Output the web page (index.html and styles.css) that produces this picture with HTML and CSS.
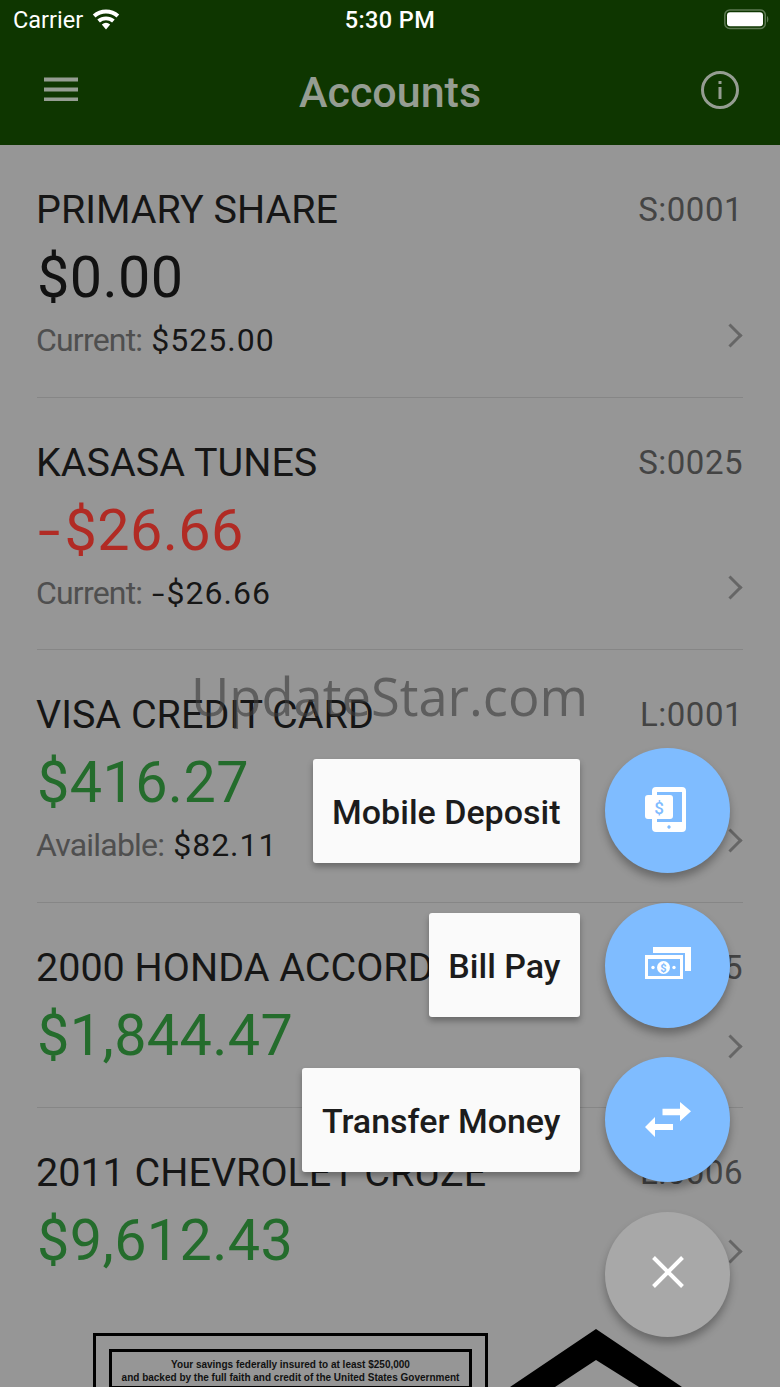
FILE: index.html
```html
<!DOCTYPE html>
<html lang="en">
<head>
<meta charset="utf-8">
<title>Accounts</title>
<link rel="stylesheet" href="styles.css">
</head>
<body>
<div class="app">
  <header class="top">
    <div class="status">
      <div class="status-left"><span>Carrier</span>
        <svg class="wifi" width="28" height="22" viewBox="0 0 28 22"><path d="M14 21.500 L9.800 16.600 A6.500 6.500 0 0 1 18.200 16.600Z M7.900 14.500 L5.300 11.600 A13.500 13.500 0 0 1 22.700 11.600 L20.100 14.500 A9.500 9.500 0 0 0 7.900 14.500Z M3.500 9.500 L.8 6.500 A20 20 0 0 1 27.200 6.500 L24.500 9.500 A16 16 0 0 0 3.500 9.500Z" fill="#fff"/></svg>
      </div>
      <div class="status-time">5:30 PM</div>
      <svg class="battery" width="46" height="22" viewBox="0 0 46 22"><rect x=".8" y="2" width="40.500" height="18.500" rx="5" fill="none" stroke="#5d7a52" stroke-width="1.500"/><rect x="3" y="4.200" width="36" height="14" rx="3" fill="#fff"/><path d="M43 8 c1.800 .5 1.800 6 0 6.500z" fill="#5d7a52"/></svg>
    </div>
    <div class="nav">
      <svg class="menu" width="36" height="24" viewBox="0 0 36 24"><path d="M1 2.500h34M1 12.500h34M1 22.500h34" stroke="#959d92" stroke-width="4"/></svg>
      <h1>Accounts</h1>
      <svg class="info" width="40" height="40" viewBox="0 0 40 40"><circle cx="20" cy="20" r="17.500" fill="none" stroke="#959d92" stroke-width="3"/><path d="M18.500 17h3v12h-3zM18.500 11h3v3h-3z" fill="#959d92"/></svg>
    </div>
  </header>

  <main class="list">
    <section class="row tall">
      <div class="row-head"><span class="name">PRIMARY SHARE</span><span class="code">S:0001</span></div>
      <div class="amount">$0.00</div>
      <div class="row-foot"><span class="sub"><span class="muted">Current:</span> $525.00</span><span class="chev"></span></div>
    </section>
    <section class="row tall">
      <div class="row-head"><span class="name">KASASA TUNES</span><span class="code">S:0025</span></div>
      <div class="amount red"><span class="neg">-</span>$26.66</div>
      <div class="row-foot"><span class="sub"><span class="muted">Current:</span> <span class="neg">-</span>$26.66</span><span class="chev"></span></div>
    </section>
    <section class="row tall">
      <div class="row-head"><span class="name">VISA CREDIT CARD</span><span class="code">L:0001</span></div>
      <div class="amount green">$416.27</div>
      <div class="row-foot"><span class="sub"><span class="muted">Available:</span> $82.11</span><span class="chev"></span></div>
    </section>
    <section class="row short">
      <div class="row-head"><span class="name">2000 HONDA ACCORD</span><span class="code">L:0005</span></div>
      <div class="row-foot"><span class="amount green">$1,844.47</span><span class="chev"></span></div>
    </section>
    <section class="row short last">
      <div class="row-head"><span class="name">2011 CHEVROLET CRUZE</span><span class="code">L:0006</span></div>
      <div class="row-foot"><span class="amount green">$9,612.43</span><span class="chev"></span></div>
    </section>
  </main>

  <footer class="badges">
    <div class="ncua">
      <div class="ncua-inner">Your savings federally insured to at least $250,000<br>and backed by the full faith and credit of the United States Government</div>
    </div>
    <svg class="house" width="172" height="58" viewBox="0 0 172 58"><path d="M86 0 L172 58 H129 L86 31 L45 58 H0Z" fill="#000"/></svg>
  </footer>

  <div class="watermark">UpdateStar.com</div>

  <div class="fabs">
    <div class="fab-row">
      <div class="fab-label">Mobile Deposit</div>
      <button class="fab blue" type="button" aria-label="Mobile Deposit">
        <svg class="icon-deposit" width="41" height="45" viewBox="0 0 41 45"><path fill="#fff" fill-rule="evenodd" d="M11 0H37a4 4 0 0 1 4 4V41a4 4 0 0 1-4 4H11a4 4 0 0 1-4-4V32H3a3 3 0 0 1-3-3V11a3 3 0 0 1 3-3H7V4a4 4 0 0 1 4-4zM12 5V8H25a3 3 0 0 1 3 3V29a3 3 0 0 1-3 3H12v3H37V5zM24 38.300a1.700 1.700 0 1 0 .01 0z"/><text x="14" y="27" font-family="Roboto" font-size="17" font-weight="500" fill="#7fbcff" text-anchor="middle">$</text></svg>
      </button>
    </div>
    <div class="fab-row">
      <div class="fab-label">Bill Pay</div>
      <button class="fab blue" type="button" aria-label="Bill Pay">
        <svg class="icon-up" width="46" height="32" viewBox="0 0 46 32"><path d="M8 0h38v24h-6V6H8z" fill="#fff"/><rect x="0" y="8" width="38" height="24" fill="#fff"/><rect x="3" y="12" width="32" height="17" fill="#7fbcff"/><circle cx="18.500" cy="20.500" r="6.500" fill="#fff"/><circle cx="8" cy="20.500" r="1.700" fill="#fff"/><circle cx="29" cy="20.500" r="1.700" fill="#fff"/><text x="18.500" y="24.500" font-family="Roboto" font-size="11" font-weight="700" fill="#7fbcff" text-anchor="middle">$</text></svg>
      </button>
    </div>
    <div class="fab-row">
      <div class="fab-label">Transfer Money</div>
      <button class="fab blue" type="button" aria-label="Transfer Money">
        <svg width="46" height="35" viewBox="0 0 46 35"><path d="M17.500 6.700H35V0L46 9.300 35 19.300V13.300H17.500zM28 22V28H10V35L0 25 10 15V22z" fill="#fff"/></svg>
      </button>
    </div>
    <div class="fab-row">
      <button class="fab grey" type="button" aria-label="Close">
        <svg class="icon-up" width="32" height="32" viewBox="0 0 32 32"><path d="M1.500 1.500l29 29M30.500 1.500l-29 29" stroke="#fff" stroke-width="4"/></svg>
      </button>
    </div>
  </div>
</div>
</body>
</html>
```
FILE: styles.css
```css
* { box-sizing: border-box; }
html, body { margin: 0; padding: 0; }
body { width: 780px; height: 1387px; overflow: hidden; background: #969696; font-family: Roboto, "Liberation Sans", sans-serif; }
.app { position: relative; width: 780px; height: 1387px; overflow: hidden; }

.top { height: 145px; background: #0e3600; }
.status { height: 40px; position: relative; display: flex; align-items: center; justify-content: space-between; padding: 0 13px; color: #fff; font-size: 23.5px; }
.status-left { display: flex; align-items: center; gap: 9px; }
.wifi { margin-top: -2px; }
.status-time { position: absolute; left: 0; right: 0; text-align: center; font-weight: 500; letter-spacing: .4px; }
.battery { margin-right: -3px; margin-top: -2px; }
.nav { height: 105px; display: flex; align-items: center; justify-content: space-between; padding: 0 40px 0 43px; position: relative; }
.nav h1 { position: absolute; left: 0; right: 0; margin: 0; text-align: center; font-size: 43px; line-height: 107px; font-weight: 500; color: #959d92; }
.menu { margin-top: -8px; }
.info { margin-top: -6px; }

.list { display: flex; flex-direction: column; padding: 0 37px; }
.row { border-bottom: 1px solid #868686; display: flex; flex-direction: column; }
.row.tall { height: 252.5px; padding-top: 42px; }
.row.short { height: 205px; padding-top: 42px; }
.row.last { border-bottom: none; height: 203px; }
.row-head { display: flex; justify-content: space-between; align-items: flex-start; line-height: 46px; height: 46px; }
.name { font-size: 39.5px; color: #161616; margin-left: -1px; }
.code { font-size: 33px; color: #444; letter-spacing: .5px; }
.amount { font-size: 57.5px; line-height: 68px; color: #111; letter-spacing: .4px; margin-top: 11px; }
.amount.red { color: #b12b24; }
.amount.green { color: #246c2c; }
.neg { display: inline-block; width: .46em; margin-left: .02em; transform: scaleX(1.4); transform-origin: left; }
.row-foot { display: flex; justify-content: space-between; align-items: center; }
.row.tall .row-foot { height: 46px; margin-top: 5px; }
.row.short .row-foot { height: 68px; margin-top: 11px; }
.row.short .amount { margin-top: 0; }
.sub { font-size: 32px; color: #161616; letter-spacing: 1px; margin-left: -1px; }
.muted { color: #4f4f4f; letter-spacing: -.8px; }
.chev { width: 17px; height: 17px; border-top: 3.500px solid #666; border-right: 3.500px solid #666; transform: rotate(45deg); margin-right: 4.500px; margin-top: -10px; }
.row.short .chev { margin-top: 22px; }

.badges { position: absolute; left: 0; top: 1333px; width: 780px; height: 54px; }
.ncua { position: absolute; left: 93px; top: 0; width: 395px; height: 60px; border: 3px solid #000; padding: 13px 13px 0; }
.ncua-inner { border: 3px solid #000; height: 40px; padding-top: 6px; font-family: "Liberation Sans", sans-serif; font-size: 10px; line-height: 13px; font-weight: 700; text-align: center; color: #111; white-space: nowrap; }
.house { position: absolute; left: 510px; top: -4px; }

.watermark { position: absolute; left: 191px; top: 662px; font-family: "Open Sans", sans-serif; font-size: 52.5px; line-height: 68px; color: rgba(60,60,60,.62); white-space: nowrap; }

.fabs { position: absolute; right: 50px; top: 748px; display: flex; flex-direction: column; gap: 29.5px; align-items: flex-end; }
.fab-row { display: flex; align-items: center; gap: 25px; }
.fab { width: 125px; height: 125px; border: 0; border-radius: 50%; padding: 0; display: flex; align-items: center; justify-content: center; box-shadow: 0 6px 9px rgba(0,0,0,.3); }
.fab.blue { background: #7fbcff; }
.fab.grey { background: #a8a8a8; }
.icon-deposit { margin: 0 4px 2px 0; }
.icon-up { margin-bottom: 5px; }
.fab-label { height: 104px; padding: 2px 19.5px 0; display: flex; align-items: center; background: #fafafa; border-radius: 3px; font-size: 34px; font-weight: 500; color: #1c1c1c; box-shadow: 0 4px 6px rgba(0,0,0,.3); white-space: nowrap; }
```
